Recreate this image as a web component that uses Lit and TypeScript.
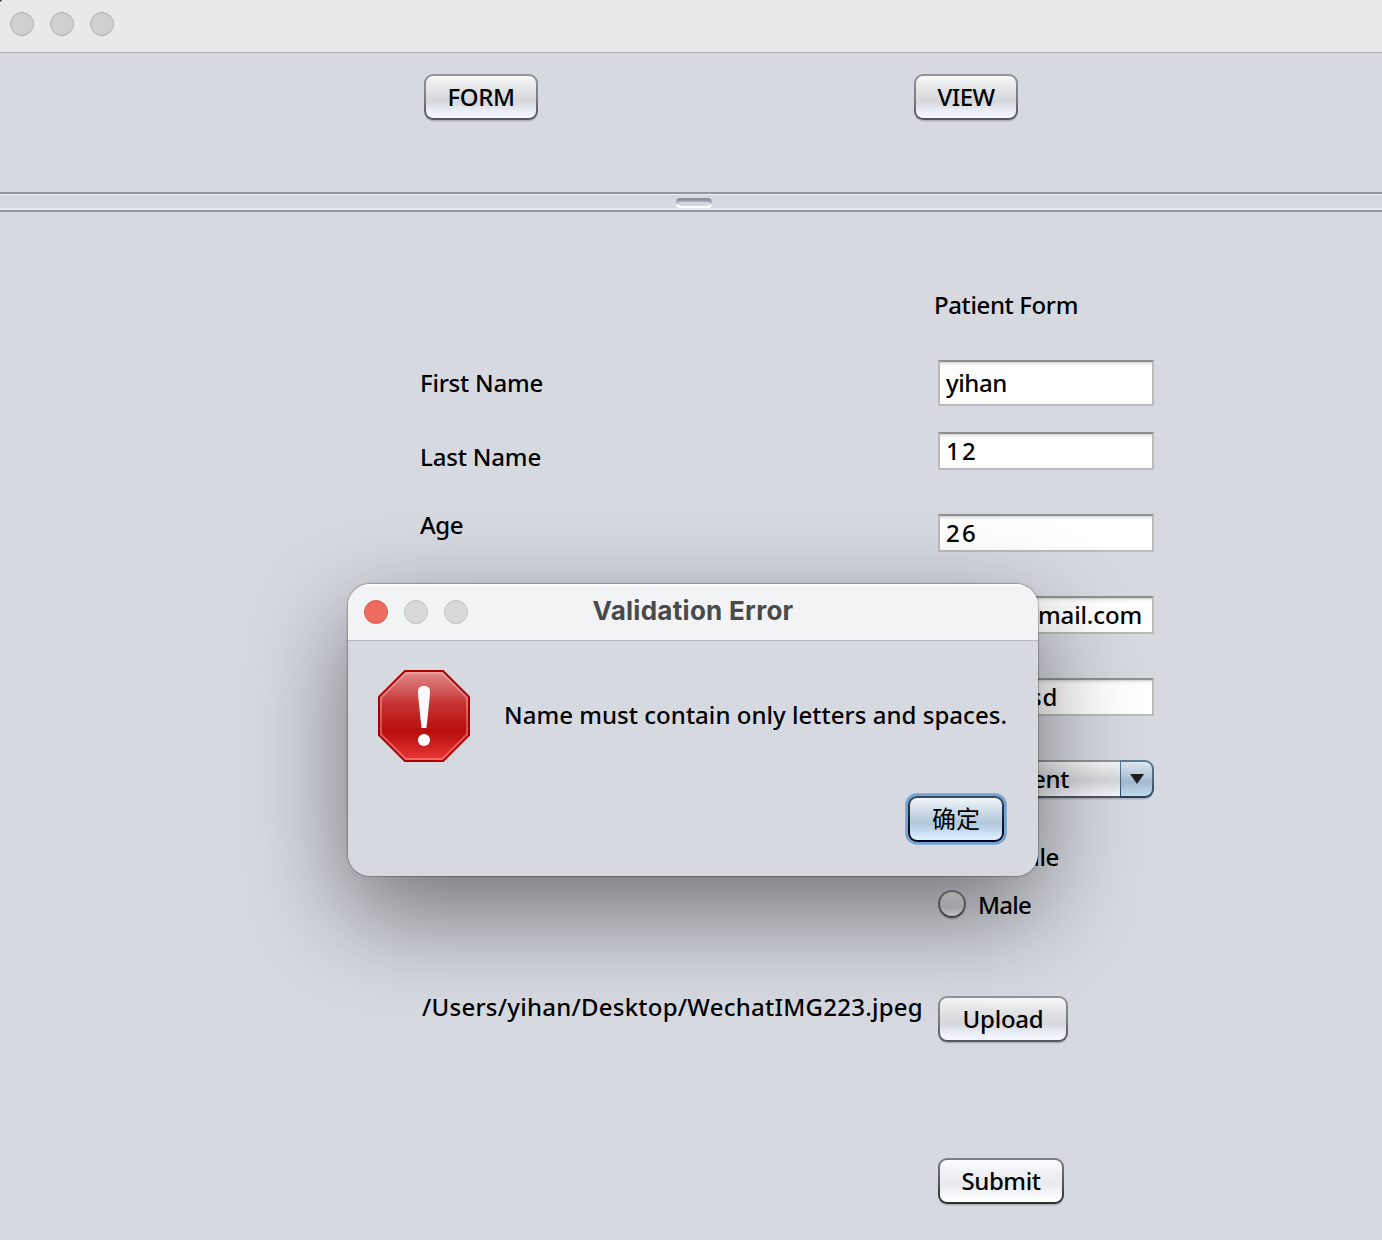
import { LitElement, html, css, svg } from "lit";
import { customElement, property } from "lit/decorators.js";

/** A single line of text, tracked so that it takes up exactly `width` pixels. */
@customElement("fit-text")
class FitText extends LitElement {
  @property({ type: Number }) width = 0;
  @property() text = "";

  static styles = css`
    :host {
      display: inline-block;
      white-space: pre;
    }
    .run {
      display: inline-block;
    }
  `;

  render() {
    return html`<span class="run">${this.text}</span>`;
  }

  updated() {
    const run = this.renderRoot.querySelector<HTMLElement>(".run")!;
    run.style.letterSpacing = "0px";
    const natural = run.getBoundingClientRect().width;
    if (this.width && natural) {
      run.style.letterSpacing = `${(this.width - natural) / this.text.length}px`;
    }
  }
}

const t = (text: string, width: number) => html`<fit-text .text=${text} .width=${width}></fit-text>`;

@customElement("app-root")
class AppRoot extends LitElement {
  static styles = css`
    :host {
      display: block;
      position: relative;
      width: 1382px;
      height: 1240px;
      overflow: hidden;
      background: #d6d9e0;
      color: #000;
      font: 500 24px/34px "Noto Sans", "Noto Sans CJK SC", sans-serif;
    }
    * {
      box-sizing: border-box;
    }
    .titlebar {
      display: flex;
      align-items: flex-start;
      gap: 16px;
      height: 53px;
      padding: 12px 10px;
      background: radial-gradient(circle at 0 0, #333 1.2px, transparent 2.2px), #e8e9eb;
      border-bottom: 1px solid #aeb0b7;
    }
    .light {
      width: 24px;
      height: 24px;
      border-radius: 50%;
      background: #cfd0d1;
      border: 1px solid #b0b1b3;
    }
    .toolbar {
      display: flex;
      gap: 376px;
      height: 139px;
      padding: 21px 0 0 424px;
    }
    .button {
      display: flex;
      align-items: center;
      justify-content: center;
      height: 46px;
      border: 2px solid transparent;
      border-radius: 9px;
      background:
        linear-gradient(#f9f9fa, #e3e5e7 30%, #d6d8dc 58%, #d8dae0 64%, #e9ebf4 80%, #f8f9ff) padding-box,
        linear-gradient(#92969b, #7b7f85 50%, #52565c) border-box;
      box-shadow: 0 2px 0 -0.5px rgba(130, 134, 142, 0.45);
    }
    .form {
      width: 114px;
    }
    .view {
      width: 104px;
    }
    .upload {
      width: 130px;
    }
    .submit {
      width: 126px;
      background:
        linear-gradient(#fdfdfe, #f0f1f5 30%, #e8eaf0 58%, #eceef4 66%, #fafbfd 88%, #fff) padding-box,
        linear-gradient(#7c808a, #545962 50%, #272c35) border-box;
    }
    .splitter {
      display: flex;
      justify-content: center;
      height: 20px;
      padding: 4px 0 0 6px;
      border-top: 2px solid #9297a1;
      border-bottom: 2px solid #9297a1;
      background: linear-gradient(#e8ebf1 0 1px, transparent 1px 14px, #e8ebf1 14px);
    }
    .grip {
      width: 36px;
      height: 10px;
      border-radius: 4px;
      background: linear-gradient(#8e929c 0 2px, #a5a9b3 3px, #c0c3ca 5px, #eceef1 7px, #fff 8px);
      display: flex;
      padding: 4px 3px 2px;
    }
    .grip-core {
      flex: 1;
      height: 4px;
      border-radius: 2px;
      background: #d3d6dd;
    }
    .heading {
      display: flex;
      padding: 76px 0 0 934px;
      height: 148px;
    }
    .row {
      display: grid;
      grid-template: 100% / 518px 1fr;
      align-items: center;
      height: 38px;
      margin: 0 0 44px 420px;
    }
    .row.first {
      height: 46px;
      margin-bottom: 26px;
    }
    .label {
      display: flex;
    }
    .low {
      padding-top: 12px;
    }
    .high {
      padding-bottom: 16px;
    }
    .path {
      padding: 0 0 24px 2px;
    }
    .field {
      display: flex;
      grid-column: 2;
      align-items: center;
      width: 216px;
      height: 38px;
      padding: 0 6px;
      border: 2px solid #bbbbbc;
      border-top-color: #8f9092;
      background: linear-gradient(#d0d1d3, #f4f4f5 2px, #fff 5px);
    }
    .first .field {
      height: 46px;
    }
    .end {
      justify-content: flex-end;
      padding-right: 10px;
    }
    .password {
      padding-left: 90px;
    }
    .combo {
      display: flex;
      grid-column: 2;
      align-items: center;
      width: 216px;
      height: 38px;
      border-radius: 9px;
      box-shadow: 0 2px 0 -0.5px rgba(130, 134, 142, 0.45);
    }
    .combo-value {
      display: flex;
      align-items: center;
      width: 182px;
      height: 38px;
      padding-left: 92px;
      border: 2px solid transparent;
      border-right: 0;
      border-radius: 9px 0 0 9px;
      background:
        linear-gradient(#f9f9fa, #e3e5e7 30%, #d6d8dc 56%, #e9ebf0 80%, #f8f9ff) padding-box,
        linear-gradient(#92969b, #52565c) border-box;
    }
    .combo-arrow {
      display: flex;
      align-items: center;
      justify-content: center;
      width: 34px;
      height: 38px;
      border: 2px solid transparent;
      border-left-width: 1px;
      border-radius: 0 9px 9px 0;
      background:
        linear-gradient(#dfe8ef, #b9ccdb 38%, #a2bbd0 58%, #b4cce0 80%, #c4dcf0) padding-box,
        linear-gradient(#5f7c96, #4b6881 50%, #24405a) border-box;
    }
    .radio {
      display: flex;
      grid-column: 2;
      align-items: center;
      gap: 12px;
    }
    .dot {
      width: 28px;
      height: 28px;
      margin-top: -3px;
      border: 2px solid transparent;
      border-radius: 50%;
      background:
        linear-gradient(#f6f7f8, #dcdee2 45%, #d4d6db 60%, #f4f5fa) padding-box,
        linear-gradient(#8c9095, #4d5157) border-box;
      box-shadow: 0 2px 0 -0.5px rgba(130, 134, 142, 0.4);
    }
    .row.female {
      height: 48px;
      margin: -9px 0 0 420px;
    }
    .row.male {
      height: 48px;
      margin-bottom: 67px;
    }
    .row.file {
      height: 46px;
      margin-bottom: 116px;
    }
    .row.send {
      height: 46px;
      margin-bottom: 0;
    }
    .action {
      display: flex;
      grid-column: 2;
    }
    .dialog {
      position: absolute;
      left: 348px;
      top: 584px;
      width: 690px;
      height: 292px;
      border-radius: 22px;
      overflow: hidden;
      background: #d6d9e0;
    }
    .shade {
      position: absolute;
      left: 348px;
      top: 584px;
      width: 690px;
      height: 292px;
      border-radius: 22px;
      box-shadow:
        0 0 0 1px rgba(0, 0, 0, 0.2),
        0 0 4px rgba(0, 0, 0, 0.1),
        0 36px 100px rgba(0, 0, 0, 0.48);
    }
    .dialog-bar {
      display: grid;
      grid-template-columns: 1fr auto 1fr;
      height: 57px;
      padding: 10px 16px 0;
      background: #f2f3f5;
      border-bottom: 1px solid #b4b6bb;
      box-shadow: inset 0 2px 0 #fafbfb;
    }
    .lights {
      display: flex;
      gap: 16px;
      padding-top: 6px;
    }
    .dialog .light {
      background: #d8d9da;
      border-color: #bfc0c1;
    }
    .dialog .close {
      background: #ed6b60;
      border-color: #d9574d;
    }
    .title {
      font: 700 26px/34px Inter, sans-serif;
      color: #494a4b;
    }
    .message {
      display: flex;
      gap: 34px;
      padding: 29px 0 0 30px;
    }
    .message-text {
      padding-top: 28px;
    }
    .icon {
      width: 92px;
      height: 92px;
    }
    .dialog-actions {
      display: flex;
      justify-content: flex-end;
      padding: 34px 34px 0 0;
    }
    .ok {
      width: 96px;
      font-weight: 400;
      background:
        linear-gradient(#f3f7f9, #d0dde8 30%, #b2c8da 58%, #b8cee0 66%, #d0e6f8 88%, #def0ff) padding-box,
        linear-gradient(#354a63, #14203c 50%, #000020) border-box;
      box-shadow: 0 0 0 2.8px #74a3d2;
    }
  `;

  private errorIcon = svg`
    <svg class="icon" viewBox="0 0 92 92">
      <defs>
        <linearGradient id="fill" x1="0" y1="0" x2="0" y2="1">
          <stop offset="0" stop-color="#e08484" />
          <stop offset="0.22" stop-color="#d15453" />
          <stop offset="0.36" stop-color="#c43130" />
          <stop offset="0.68" stop-color="#b80f0e" />
          <stop offset="0.86" stop-color="#d02322" />
          <stop offset="1" stop-color="#e83434" />
        </linearGradient>
        <linearGradient id="rim" x1="0" y1="0" x2="0" y2="1">
          <stop offset="0" stop-color="#e9a0a0" />
          <stop offset="0.6" stop-color="#cc4f4f" />
          <stop offset="1" stop-color="#f56a6a" />
        </linearGradient>
      </defs>
      <path d="M26.500 0h39L92 26.500v39L65.500 92h-39L0 65.500v-39z" fill="#ae0000" />
      <path d="M27.300 2h37.400L90 27.300v37.400L64.700 90H27.300L2 64.700V27.300z" fill="url(#rim)" />
      <path d="M28.100 4h35.800L88 28.100v35.800L63.900 88H28.100L4 63.900V28.100z" fill="url(#fill)" />
      <path d="M40 21.500C40 17.500 42.500 16 46 16s6 1.500 6 5.500c0 4-2.300 26-3.600 36.500h-4.800C42.300 47.500 40 25.500 40 21.500z" fill="#fafafa" />
      <circle cx="46" cy="70" r="6.100" fill="#fafafa" />
    </svg>
  `;

  render() {
    return html`
      <div class="titlebar"><i class="light"></i><i class="light"></i><i class="light"></i></div>
      <div class="toolbar">
        <div class="button form">${t("FORM", 67)}</div>
        <div class="button view">${t("VIEW", 57)}</div>
      </div>
      <div class="splitter"><div class="grip"><i class="grip-core"></i></div></div>

      <div class="heading">${t("Patient Form", 144)}</div>
      <div class="row first">
        <div class="label">${t("First Name", 123)}</div>
        <div class="field">${t("yihan", 61)}</div>
      </div>
      <div class="row">
        <div class="label low">${t("Last Name", 121)}</div>
        <div class="field">${t("12", 32)}</div>
      </div>
      <div class="row">
        <div class="label high">${t("Age", 43)}</div>
        <div class="field">${t("26", 32)}</div>
      </div>
      <div class="row"><div class="field end">${t("mail.com", 104)}</div></div>
      <div class="row"><div class="field password">${t("sd", 28)}</div></div>
      <div class="row">
        <div class="combo">
          <div class="combo-value">${t("ent", 37)}</div>
          <div class="combo-arrow">
            <svg width="14" height="10" viewBox="0 0 14 10"><path d="M0 0h14L7 10z" fill="#1c1f22" /></svg>
          </div>
        </div>
      </div>
      <div class="row female">
        <div class="radio"><i class="dot"></i>${t("Female", 81)}</div>
      </div>
      <div class="row male">
        <div class="radio"><i class="dot"></i>${t("Male", 53)}</div>
      </div>
      <div class="row file">
        <div class="label path">${t("/Users/yihan/Desktop/WechatIMG223.jpeg", 501)}</div>
        <div class="action"><div class="button upload">${t("Upload", 81)}</div></div>
      </div>
      <div class="row send">
        <div class="action"><div class="button submit">${t("Submit", 79)}</div></div>
      </div>

      <div class="shade"></div>
      <div class="dialog">
        <div class="dialog-bar">
          <div class="lights"><i class="light close"></i><i class="light"></i><i class="light"></i></div>
          <div class="title">${t("Validation Error", 201)}</div>
        </div>
        <div class="message">
          ${this.errorIcon}
          <div class="message-text">${t("Name must contain only letters and spaces.", 503)}</div>
        </div>
        <div class="dialog-actions"><div class="button ok">${t("确定", 48)}</div></div>
      </div>
    `;
  }
}
